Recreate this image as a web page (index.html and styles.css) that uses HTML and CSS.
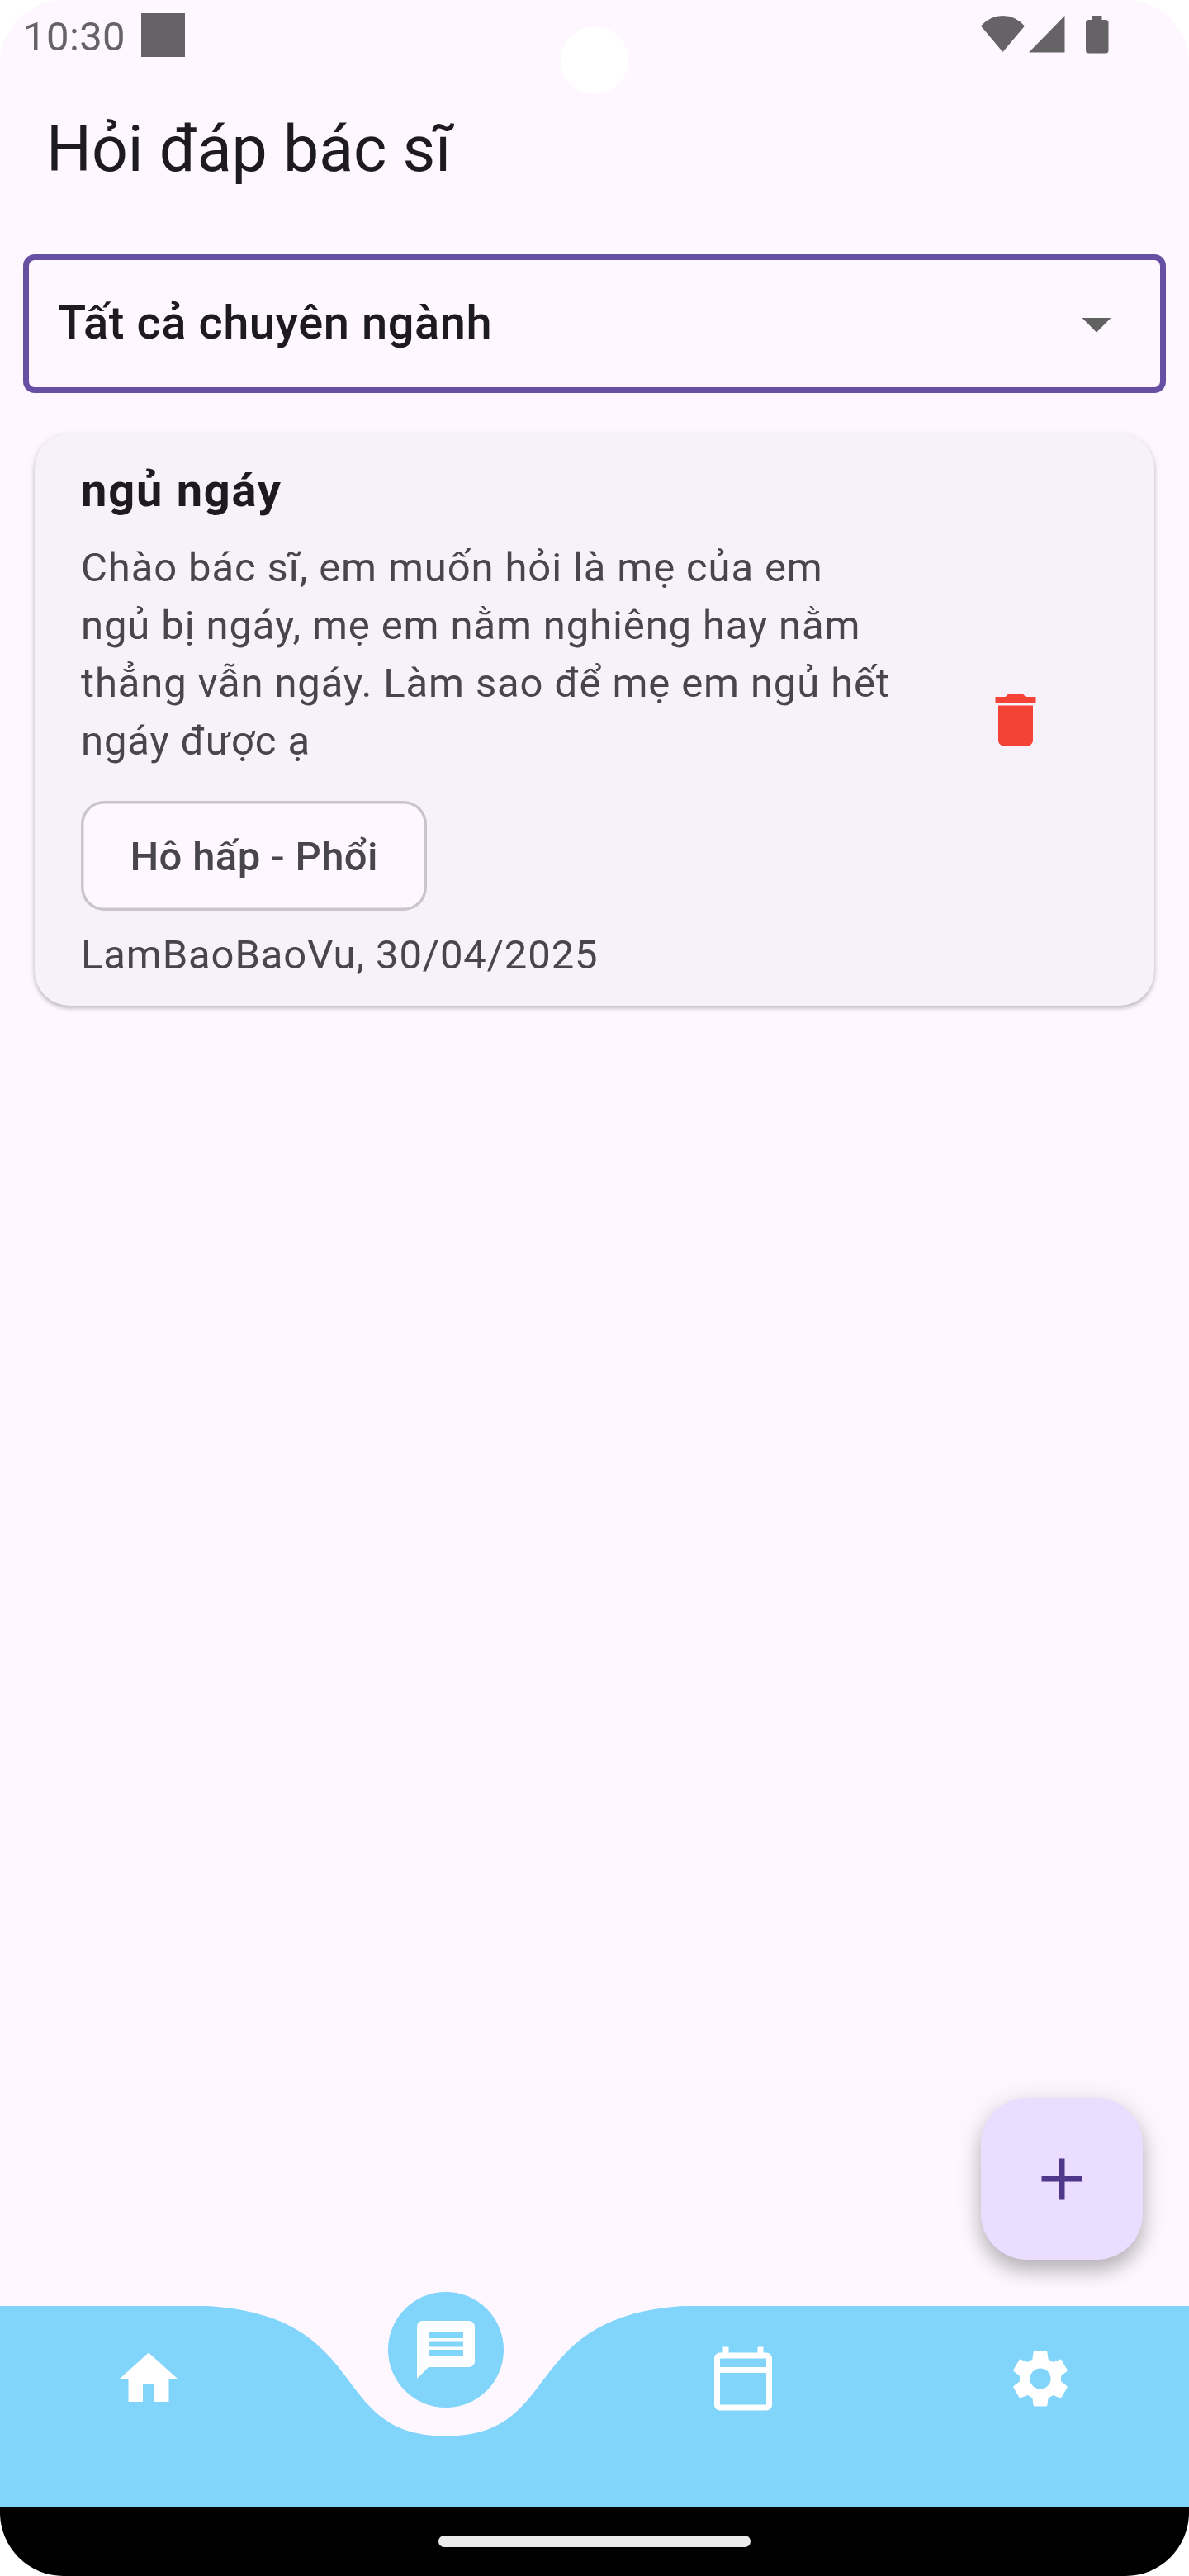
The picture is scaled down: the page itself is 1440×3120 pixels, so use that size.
FILE: index.html
```html
<!DOCTYPE html>
<html lang="vi">
<head>
<meta charset="utf-8">
<title>Hỏi đáp bác sĩ</title>
<link rel="stylesheet" href="styles.css">
</head>
<body>
<div class="screen">
  <header class="status">
    <div class="status-left">
      <span class="clock">10:30</span>
      <span class="notice"></span>
    </div>
    <svg class="status-icons" width="156" height="48" viewBox="0 0 156 48">
      <path d="M0 13.5Q11 1 26.500 1T53 13.500L26.500 45z"/>
      <path d="M58 45.500L101.500 1V45.500z"/>
      <path d="M134.500 1h12v5h4.500a3.500 3.500 0 0 1 3.500 3.500v33.500a3.500 3.500 0 0 1-3.500 3.500h-20.500a3.500 3.500 0 0 1-3.500-3.500V9.500a3.500 3.500 0 0 1 3.500-3.500h4z"/>
    </svg>
    <span class="camera"></span>
  </header>

  <h1 class="page-title">Hỏi đáp bác sĩ</h1>

  <main class="content">
    <div class="select">
      <span class="select-value">Tất cả chuyên ngành</span>
      <svg class="icon" viewBox="0 0 24 24"><path d="M7 10l5 5 5-5z"/></svg>
    </div>

    <article class="card">
      <div class="card-body">
        <h2 class="card-title">ngủ ngáy</h2>
        <p class="card-text">Chào bác sĩ, em muốn hỏi là mẹ của em<br>ngủ bị ngáy, mẹ em nằm nghiêng hay nằm<br>thẳng vẫn ngáy. Làm sao để mẹ em ngủ hết<br>ngáy được ạ</p>
        <span class="chip">Hô hấp - Phổi</span>
        <p class="card-meta">LamBaoBaoVu, 30/04/2025</p>
      </div>
      <button class="delete" aria-label="Xóa">
        <svg class="icon" viewBox="0 0 24 24"><path d="M6 19c0 1.1.9 2 2 2h8c1.100 0 2-.9 2-2V7H6v12zM19 4h-3.500l-1-1h-5l-1 1H5v2h14V4z"/></svg>
      </button>
    </article>
  </main>

  <button class="fab" aria-label="Thêm">
    <svg class="icon" viewBox="0 0 24 24"><path d="M19 13h-6v6h-2v-6H5v-2h6V5h2v6h6v2z"/></svg>
  </button>

  <nav class="nav">
    <svg class="nav-shape" width="1440" height="243" viewBox="0 0 1440 243"><path d="M0 0H252C453.600 13.125 396 157.500 540 157.500C684 157.500 626.400 13.125 828 0H1440V243H0z"/></svg>
    <a class="tab"><svg class="icon" viewBox="0 0 24 24"><path d="M10 20v-6h4v6h5v-8h3L12 3 2 12h3v8z"/></svg></a>
    <a class="tab active"><span class="bubble"><svg class="icon" viewBox="0 0 24 24"><path d="M20 2H4c-1.100 0-1.990.9-1.990 2L2 22l4-4h14c1.100 0 2-.9 2-2V4c0-1.100-.9-2-2-2zm-2 12H6v-2h12v2zm0-3H6V9h12v2zm0-3H6V6h12v2z"/></svg></span></a>
    <a class="tab"><svg class="icon" viewBox="0 0 24 24"><path d="M20 3h-1V1h-2v2H7V1H5v2H4c-1.100 0-2 .9-2 2v16c0 1.100.9 2 2 2h16c1.100 0 2-.9 2-2V5c0-1.100-.9-2-2-2zm0 18H4V10h16v11zm0-13H4V5h16v3z"/></svg></a>
    <a class="tab"><svg class="icon" viewBox="0 0 24 24"><path d="M19.140 12.940c.04-.3.06-.61.06-.94 0-.32-.02-.64-.07-.94l2.030-1.580c.18-.14.23-.41.12-.61l-1.920-3.320c-.12-.22-.37-.29-.59-.22l-2.390.96c-.5-.38-1.030-.7-1.620-.94l-.36-2.540c-.04-.24-.24-.41-.48-.41h-3.840c-.24 0-.43.17-.47.41l-.36 2.540c-.59.24-1.130.57-1.620.94l-2.390-.96c-.22-.08-.47 0-.59.22L2.740 8.870c-.12.21-.08.47.12.61l2.030 1.580c-.05.3-.09.63-.09.94s.02.64.07.94l-2.030 1.580c-.18.14-.23.41-.12.61l1.920 3.320c.12.22.37.29.59.22l2.390-.96c.5.38 1.030.7 1.620.94l.36 2.540c.05.24.24.41.48.41h3.840c.24 0 .44-.17.47-.41l.36-2.540c.59-.24 1.130-.56 1.620-.94l2.390.96c.22.08.47 0 .59-.22l1.920-3.320c.12-.22.07-.47-.12-.61l-2.010-1.580zM12 15.600c-1.980 0-3.600-1.620-3.600-3.600s1.620-3.600 3.600-3.600 3.600 1.620 3.600 3.600-1.620 3.600-3.600 3.600z"/></svg></a>
  </nav>

  <footer class="system-bar"><span class="handle"></span></footer>
</div>
</body>
</html>
```
FILE: styles.css
```css
* { box-sizing: border-box; margin: 0; padding: 0; }

body {
  background: #fff;
  font-family: Roboto, "Noto Sans", sans-serif;
  color: #1d1b20;
}

button { border: 0; background: none; }

.screen {
  position: relative;
  display: flex;
  flex-direction: column;
  width: 1440px;
  height: 3120px;
  overflow: hidden;
  background: #fef7ff;
  border-radius: 77px;
}

.icon { display: block; width: 84px; height: 84px; fill: currentColor; }

/* Status bar */
.status {
  position: relative;
  display: flex;
  justify-content: space-between;
  align-items: flex-start;
  height: 132px;
  padding: 16px 96px 0 28px;
  color: #666366;
}
.status-left { display: flex; gap: 20px; }
.clock { width: 123px; height: 53px; font-size: 49px; line-height: 58px; letter-spacing: 0.4px; white-space: nowrap; }
.notice { width: 53px; height: 53px; background: currentColor; }
.status-icons { margin-top: 2px; fill: currentColor; }
.camera {
  position: absolute;
  left: 679px;
  top: 32px;
  width: 82px;
  height: 82px;
  border-radius: 50%;
  background: #fff;
}

.page-title {
  height: 176px;
  padding-left: 56px;
  font-size: 77px;
  line-height: 98px;
  font-weight: 400;
}

.content { flex: 1; padding: 0 28px; }

.select {
  display: flex;
  align-items: center;
  justify-content: space-between;
  height: 168px;
  padding: 0 35px;
  border: 7px solid #6750a4;
  border-radius: 14px;
  font-size: 56px;
  line-height: 84px;
  font-weight: 500;
  letter-spacing: 0.55px;
}
.select-value { padding-bottom: 2px; }
.select .icon { color: #616161; }

.card {
  display: flex;
  align-items: center;
  justify-content: space-between;
  height: 693px;
  margin: 49px 14px 0;
  padding: 0 126px 0 56px;
  border-radius: 42px;
  background: #f7f2fa;
  box-shadow: 0 3px 5px rgba(0, 0, 0, 0.2), 0 2px 8px rgba(0, 0, 0, 0.1);
}
.card-body { display: flex; flex-direction: column; align-items: flex-start; }
.card-title { font-size: 56px; line-height: 84px; font-weight: 700; letter-spacing: 1.75px; }
.card-text, .card-meta {
  font-size: 49px;
  line-height: 70px;
  letter-spacing: 0.875px;
  color: #49454f;
  white-space: nowrap;
}
.card-text { margin-top: 17px; }
.chip {
  height: 133px;
  margin: 37px 0 19px;
  padding: 33px 59.5px 0;
  border-radius: 28px;
  background: #fef7ff;
  box-shadow: inset 0 0 0 3.5px #cac4d0;
  font-size: 49px;
  line-height: 70px;
  font-weight: 500;
  letter-spacing: 0.35px;
  color: #49454f;
}
.delete { color: #f44336; }

.fab {
  position: absolute;
  left: 1188px;
  top: 2541px;
  display: flex;
  align-items: center;
  justify-content: center;
  width: 196px;
  height: 196px;
  border-radius: 56px;
  background: #eaddff;
  color: #4f378a;
  box-shadow: 0 14px 22px rgba(0, 0, 0, 0.22), 0 4px 36px rgba(0, 0, 0, 0.11);
}

/* Bottom navigation */
.nav { position: relative; display: flex; height: 243px; color: #fff; }
.nav-shape { position: absolute; inset: 0; fill: #81d4fa; }
.tab { position: relative; flex: 1; display: flex; justify-content: center; padding-top: 46px; }
.bubble {
  position: absolute;
  left: 110px;
  top: -17.5px;
  display: flex;
  align-items: center;
  justify-content: center;
  width: 140px;
  height: 140px;
  padding-top: 1px;
  border-radius: 50%;
  background: #81d4fa;
}

.system-bar { display: flex; justify-content: center; height: 84px; padding-top: 35px; background: #000; }
.handle { width: 378px; height: 14px; border-radius: 7px; background: #ebebeb; }
```
